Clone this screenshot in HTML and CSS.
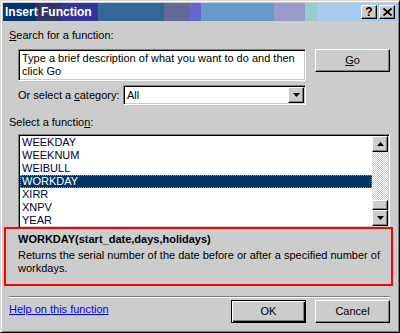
FILE: index.html
```html
<!DOCTYPE html>
<html>

<head>
    <title>Insert Function</title>
    <link rel="stylesheet" href="styles.css">
</head>

<body>
    <div class="dialog">
        <!-- title bar -->
        <div class="titlebar">
            <span class="title">Insert Function</span>
            <div class="title-btns">
                <span class="tbtn">?</span>
                <span class="tbtn">
                    <svg width="9" height="8" viewBox="0 0 9 8">
                        <path d="M0.5 0.5 L8.5 7.5 M8.5 0.5 L0.5 7.5" stroke="#000" stroke-width="1.8" fill="none" />
                    </svg>
                </span>
            </div>
        </div>

        <div class="label search-label"><u>S</u>earch for a function:</div>

        <div class="search-row">
            <div class="textbox">Type a brief description of what you want to do and then click Go</div>
            <div class="btn go"><u>G</u>o</div>
        </div>

        <div class="cat-row">
            <span class="cat-label">Or select a <u>c</u>ategory:</span>
            <div class="select">
                <span class="select-value">All</span>
                <span class="drop-btn">
                    <svg width="7" height="4" viewBox="0 0 7 4"><polygon points="0,0 7,0 3.5,4" fill="#000" /></svg>
                </span>
            </div>
        </div>

        <div class="label fn-label">Select a functio<u>n</u>:</div>

        <div class="listbox">
            <ul class="items">
                <li>WEEKDAY</li>
                <li>WEEKNUM</li>
                <li>WEIBULL</li>
                <li class="selected">WORKDAY</li>
                <li>XIRR</li>
                <li>XNPV</li>
                <li>YEAR</li>
            </ul>
            <div class="scrollbar">
                <span class="sbtn">
                    <svg width="7" height="4" viewBox="0 0 7 4"><polygon points="0,4 7,4 3.5,0" fill="#000" /></svg>
                </span>
                <div class="track"><span class="thumb"></span></div>
                <span class="sbtn">
                    <svg width="7" height="4" viewBox="0 0 7 4"><polygon points="0,0 7,0 3.5,4" fill="#000" /></svg>
                </span>
            </div>
        </div>

        <div class="desc">
            <div class="desc-title">WORKDAY(start_date,days,holidays)</div>
            <div class="desc-text">Returns the serial number of the date before or after a specified number of workdays.</div>
        </div>

        <div class="sep"></div>

        <div class="footer">
            <a class="help" href="#">Help on this function</a>
            <div class="btn ok">OK</div>
            <div class="btn cancel">Cancel</div>
        </div>
    </div>
</body>

</html>
```

FILE: styles.css
```css
body {
    margin: 0;
    padding: 0;
    font-family: "Liberation Sans", Arial, sans-serif;
    font-size: 11px;
    line-height: 13px;
    color: #000;
    background: #cccccc;
}

.dialog {
    box-sizing: border-box;
    width: 400px;
    height: 333px;
    padding: 2px;
    background: #cccccc;
    border: 1px solid;
    border-color: #d8d8d8 #000 #000 #d8d8d8;
    box-shadow: inset 1px 1px #fff, inset -1px -1px #808080;
    overflow: hidden;
}

/* title bar */
.titlebar {
    display: flex;
    align-items: center;
    height: 18px;
    padding: 0 2px;
    background: linear-gradient(to right,
            #06336a 0 33px,
            #333366 33px 59px,
            #333399 59px 95px,
            #336699 95px 161px,
            #666699 161px 187px,
            #6666cc 187px 198px,
            #6699cc 198px 271px,
            #9999cc 271px 302px,
            #99cccc 302px 315px,
            #a6ccf2 315px);
}

.title {
    color: #fff;
    font-weight: bold;
    font-size: 12px;
    flex: 1;
}

.title-btns {
    display: flex;
    gap: 2px;
}

.tbtn {
    box-sizing: border-box;
    display: flex;
    align-items: center;
    justify-content: center;
    width: 16px;
    height: 14px;
    background: #cccccc;
    border: 1px solid;
    border-color: #fff #000 #000 #fff;
    box-shadow: inset -1px -1px #808080;
    font-weight: bold;
    font-size: 12px;
}

.label {
    margin-left: 6px;
}

u {
    text-decoration: underline;
}

.search-label {
    margin-top: 8px;
}

/* search */
.search-row {
    display: flex;
    align-items: flex-start;
    margin: 7px 0 0 15px;
}

.textbox {
    box-sizing: border-box;
    width: 288px;
    height: 32px;
    padding: 2px 3px;
    background: #fff;
    border: 1px solid;
    border-color: #808080 #fff #fff #808080;
    box-shadow: inset 1px 1px #000, inset -1px -1px #cccccc;
}

.btn {
    box-sizing: border-box;
    width: 75px;
    height: 23px;
    background: #cccccc;
    border: 1px solid;
    border-color: #fff #000 #000 #fff;
    box-shadow: inset -1px -1px #808080;
    text-align: center;
    line-height: 20px;
}

.go {
    margin-left: 9px;
}

/* category */
.cat-row {
    display: flex;
    align-items: center;
    height: 20px;
    margin: 4px 0 0 15px;
}

.cat-label {
    width: 105px;
}

.select {
    box-sizing: border-box;
    display: flex;
    align-items: center;
    width: 183px;
    height: 20px;
    padding: 0 1px 0 3px;
    background: #fff;
    border: 1px solid;
    border-color: #808080 #fff #fff #808080;
    box-shadow: inset 1px 1px #000, inset -1px -1px #cccccc;
}

.select-value {
    flex: 1;
}

.drop-btn {
    box-sizing: border-box;
    display: flex;
    align-items: center;
    justify-content: center;
    width: 16px;
    height: 16px;
    background: #cccccc;
    border: 1px solid;
    border-color: #fff #000 #000 #fff;
    box-shadow: inset -1px -1px #808080;
}

.fn-label {
    margin-top: 11px;
}

/* function list */
.listbox {
    box-sizing: border-box;
    display: flex;
    width: 372px;
    height: 94px;
    margin: 5px 0 0 15px;
    background: #fff;
    border: 1px solid;
    border-color: #808080 #fff #fff #808080;
    box-shadow: inset 1px 1px #000, inset -1px -1px #cccccc;
    padding: 1px;
}

.items {
    flex: 1;
    margin: 0;
    padding: 0;
    list-style: none;
}

.items li {
    box-sizing: border-box;
    height: 13px;
    padding-left: 2px;
    color: #000033;
}

.items .selected {
    background: #003366;
    color: #fff;
    outline: 1px dotted #8899aa;
    outline-offset: -1px;
}

.scrollbar {
    display: flex;
    flex-direction: column;
    width: 16px;
}

.sbtn {
    box-sizing: border-box;
    display: flex;
    align-items: center;
    justify-content: center;
    height: 16px;
    background: #cccccc;
    border: 1px solid;
    border-color: #fff #000 #000 #fff;
    box-shadow: inset -1px -1px #808080;
}

.track {
    flex: 1;
    display: flex;
    flex-direction: column;
    justify-content: flex-end;
    background-image: repeating-conic-gradient(#cccccc 0 25%, #fff 0 50%);
    background-size: 2px 2px;
}

.thumb {
    box-sizing: border-box;
    height: 10px;
    background: #cccccc;
    border: 1px solid;
    border-color: #fff #000 #000 #fff;
    box-shadow: inset -1px -1px #808080;
}

/* description */
.desc {
    box-sizing: border-box;
    width: 389px;
    height: 59px;
    margin: -1px 0 0 1px;
    padding: 4px 8px 0 12px;
    border: 2px solid #ff0000;
}

.desc-title {
    font-weight: bold;
}

.desc-text {
    margin-top: 3px;
}

.sep {
    width: 381px;
    margin: 10px 0 0 6px;
    border-top: 1px solid #808080;
    border-bottom: 1px solid #fff;
}

/* footer */
.footer {
    display: flex;
    gap: 9px;
    margin: 2px 7px 0 6px;
}

.help {
    flex: 1;
    padding-top: 3px;
    color: #0000ff;
}

.ok {
    border: 1px solid #000;
    box-shadow: inset 1px 1px #fff, inset -1px -1px #000, inset -2px -2px #808080;
}
```
